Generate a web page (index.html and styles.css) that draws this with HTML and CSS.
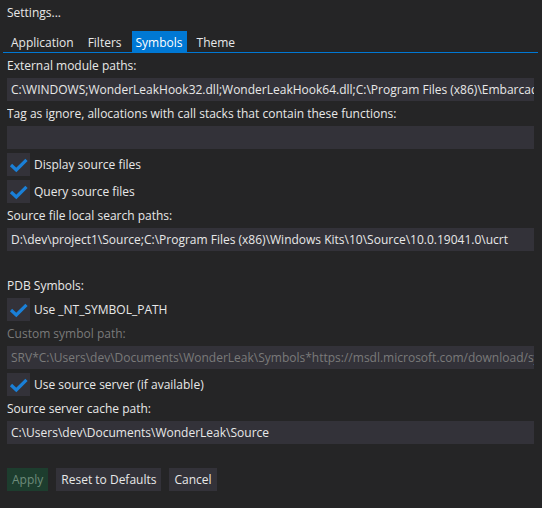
FILE: index.html
```html
<!DOCTYPE html>
<html lang="en">
  <head>
    <meta name="viewport" content="width=device-width, initial-scale=1.0" />
    <link rel="stylesheet" href="styles.css">
  </head>
  <body>
    <div class="title">Settings...</div>
    <div class="tabbar">
      <div class="tab">Application</div>
      <div class="tab">Filters</div>
      <div class="tab active">Symbols</div>
      <div class="tab">Theme</div>
    </div>
    <div class="panel">
      <div class="label">External module paths:</div>
      <div class="input">C:\WINDOWS;WonderLeakHook32.dll;WonderLeakHook64.dll;C:\Program Files (x86)\Embarcadero\Studio\21.0\bin</div>
      <div class="label">Tag as ignore, allocations with call stacks that contain these functions:</div>
      <div class="input"></div>
      <div class="check-row">
        <span class="checkbox">
          <svg width="23" height="23" viewBox="0 0 23 23"><path d="M4 12 L9.3 17 L19.5 6.8" /></svg>
        </span>
        Display source files
      </div>
      <div class="check-row">
        <span class="checkbox">
          <svg width="23" height="23" viewBox="0 0 23 23"><path d="M4 12 L9.3 17 L19.5 6.8" /></svg>
        </span>
        Query source files
      </div>
      <div class="label">Source file local search paths:</div>
      <div class="input">D:\dev\project1\Source;C:\Program Files (x86)\Windows Kits\10\Source\10.0.19041.0\ucrt</div>
      <div class="spacer"></div>
      <div class="label">PDB Symbols:</div>
      <div class="check-row">
        <span class="checkbox">
          <svg width="23" height="23" viewBox="0 0 23 23"><path d="M4 12 L9.3 17 L19.5 6.8" /></svg>
        </span>
        Use _NT_SYMBOL_PATH
      </div>
      <div class="label disabled">Custom symbol path:</div>
      <div class="input disabled">SRV*C:\Users\dev\Documents\WonderLeak\Symbols*https://msdl.microsoft.com/download/symbols</div>
      <div class="check-row">
        <span class="checkbox">
          <svg width="23" height="23" viewBox="0 0 23 23"><path d="M4 12 L9.3 17 L19.5 6.8" /></svg>
        </span>
        Use source server (if available)
      </div>
      <div class="label">Source server cache path:</div>
      <div class="input">C:\Users\dev\Documents\WonderLeak\Source</div>
      <div class="spacer-small"></div>
      <div class="buttons">
        <button class="btn apply">Apply</button>
        <button class="btn">Reset to Defaults</button>
        <button class="btn">Cancel</button>
      </div>
    </div>
  </body>
</html>
```

FILE: styles.css
```css
html,
body {
  margin: 0;
  padding: 0;
  background-color: #252526;
}
body {
  color: #e8e8e8;
  font: 12px/17px "Open Sans", "Noto Sans", sans-serif;
  width: 542px;
  height: 508px;
  overflow: hidden;
}
.title {
  padding: 4px 7px 0;
  height: 17px;
  margin-bottom: 10px;
}
.tabbar {
  display: flex;
  gap: 6px;
  margin: 0 4px 0 3px;
  padding-left: 4px;
  border-bottom: 1px solid #0078d4;
}
.tab {
  padding: 3px 4px 1px;
  white-space: nowrap;
}
.tab.active {
  background: #0078d4;
  color: #ffffff;
}
.panel {
  display: flex;
  flex-direction: column;
  gap: 4px;
  padding: 4px 8px 0 7px;
}
.label {
  white-space: nowrap;
  overflow: hidden;
}
.disabled {
  color: #7a7a7a;
}
.input {
  height: 23px;
  line-height: 23px;
  padding: 0 4px;
  background: #333239;
  white-space: nowrap;
  overflow: hidden;
}
.check-row {
  display: flex;
  align-items: center;
  gap: 4px;
  height: 23px;
  white-space: nowrap;
}
.checkbox {
  width: 23px;
  height: 23px;
  background: #333239;
  display: inline-block;
}
.checkbox svg {
  display: block;
}
.checkbox path {
  fill: none;
  stroke: #1a80d8;
  stroke-width: 3.2;
}
.spacer {
  height: 18px;
}
.spacer-small {
  height: 16px;
}
.buttons {
  display: flex;
  gap: 8px;
}
.btn {
  font: inherit;
  color: #e8e8e8;
  background: #333239;
  border: none;
  border-radius: 0;
  height: 23px;
  padding: 0 5px;
  cursor: pointer;
}
.btn.apply {
  background: #1d3d2e;
  color: #6e8c7b;
}
```
